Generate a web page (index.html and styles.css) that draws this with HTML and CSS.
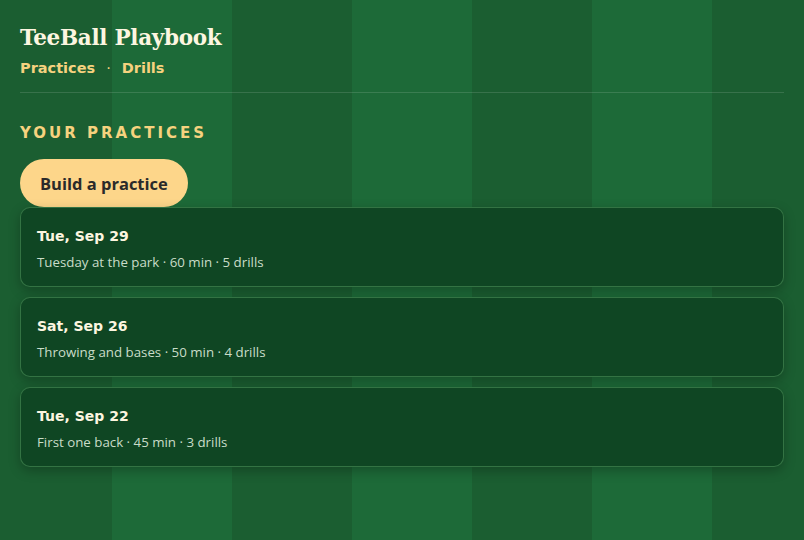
FILE: index.html
```html
<!DOCTYPE html>
<html>
<head>
<meta charset="utf-8">
<link rel="stylesheet" href="styles.css">
</head>
<body>
<div class="page">
  <header class="header">
    <h1 class="title">TeeBall Playbook</h1>
    <nav class="nav">
      <a class="nav-link">Practices</a>
      <span class="nav-sep">·</span>
      <a class="nav-link">Drills</a>
    </nav>
  </header>
  <main class="main">
    <h2 class="section-title">YOUR PRACTICES</h2>
    <button class="btn">Build a practice</button>
    <ul class="list">
      <li class="card">
        <div class="card-title">Tue, Sep 29</div>
        <div class="card-meta">Tuesday at the park · 60 min · 5 drills</div>
      </li>
      <li class="card">
        <div class="card-title">Sat, Sep 26</div>
        <div class="card-meta">Throwing and bases · 50 min · 4 drills</div>
      </li>
      <li class="card">
        <div class="card-title">Tue, Sep 22</div>
        <div class="card-meta">First one back · 45 min · 3 drills</div>
      </li>
    </ul>
  </main>
</div>
</body>
</html>
```

FILE: styles.css
```css
html, body {
  margin: 0;
  padding: 0;
  height: 100%;
}
body {
  background: repeating-linear-gradient(90deg, #1b5e31 0 120px, #1d6a38 120px 240px);
  background-position: -8px 0;
  font-family: "Open Sans", "Noto Sans", sans-serif;
  color: #fdf6e0;
}
.page {
  padding: 23px 20px 0 20px;
}
.header {
  border-bottom: 1px solid rgba(255, 255, 255, 0.13);
  padding-bottom: 13px;
}
.title {
  margin: 0;
  font-family: "DejaVu Serif", serif;
  font-weight: bold;
  font-size: 21.5px;
  line-height: 30px;
  color: #fdf6e0;
  letter-spacing: -0.3px;
}
.nav {
  display: flex;
  align-items: center;
  gap: 9px;
  margin-top: 4px;
  font-family: "DejaVu Sans", sans-serif;
  font-weight: bold;
  font-size: 14.5px;
  line-height: 22px;
  color: #f6d27f;
}
.nav-sep {
  font-weight: normal;
  margin: 0 2px;
}
.main {
  padding-top: 30px;
}
.section-title {
  margin: 0 0 16px 0;
  font-family: "DejaVu Sans", sans-serif;
  font-weight: bold;
  font-size: 15px;
  line-height: 20px;
  letter-spacing: 3px;
  color: #f6d27f;
}
.btn {
  display: block;
  height: 48px;
  padding: 0 20px;
  border: none;
  border-radius: 24px;
  background: #fdd68a;
  color: #2a2a2a;
  font-family: "Open Sans", sans-serif;
  font-weight: bold;
  font-size: 16.5px;
}
.list {
  list-style: none;
  margin: 0;
  padding: 0;
  display: flex;
  flex-direction: column;
  gap: 10px;
}
.card {
  background: #0f4623;
  border: 1px solid rgba(120, 200, 130, 0.35);
  border-radius: 10px;
  padding: 18px 16px 15px 16px;
  box-shadow: 0 4px 12px rgba(0, 0, 0, 0.25);
}
.card-title {
  font-family: "DejaVu Sans", sans-serif;
  font-weight: bold;
  font-size: 14px;
  line-height: 20px;
  color: #fdf6e0;
}
.card-meta {
  margin-top: 7px;
  font-size: 13.3px;
  line-height: 18px;
  color: #c9dcc8;
}
```
